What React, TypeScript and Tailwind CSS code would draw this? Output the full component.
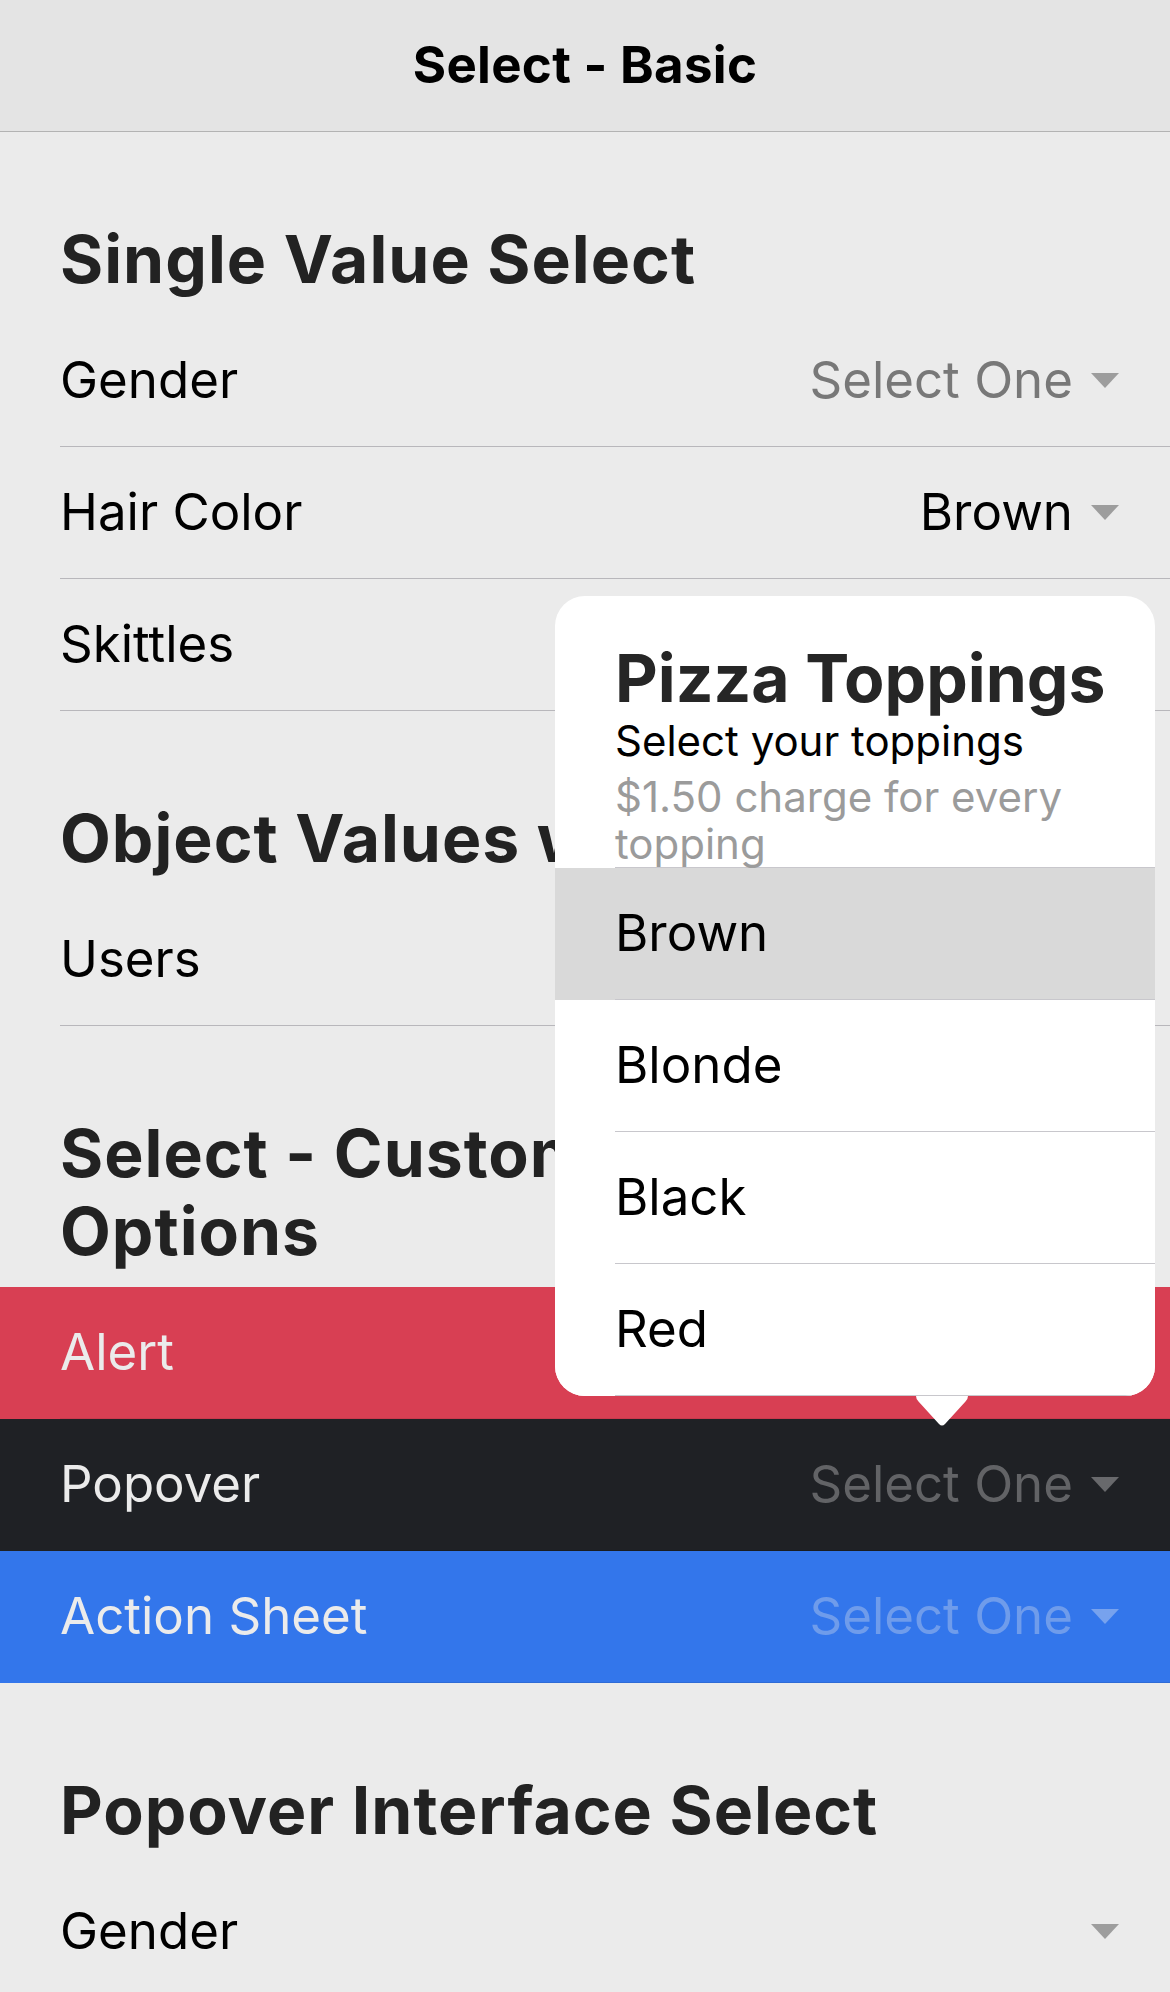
import React from "react";

type Tone = "light" | "danger" | "dark" | "primary";

const tones: Record<Tone, { bg: string; label: string; value: string; caret: string; line: string }> = {
  light: {
    bg: "bg-[#ebebeb]",
    label: "text-black",
    value: "text-[#787878]",
    caret: "border-t-[#9d9d9d]",
    line: "border-[#b8b7bb]",
  },
  danger: {
    bg: "bg-[#d83f53]",
    label: "text-[#ebebeb]",
    value: "text-[#e49aa4]",
    caret: "border-t-[#e49aa4]",
    line: "border-[#c93a4d]",
  },
  dark: {
    bg: "bg-[#1f2125]",
    label: "text-[#ebebeb]",
    value: "text-[#626366]",
    caret: "border-t-[#68696c]",
    line: "border-[#1a1c1f]",
  },
  primary: {
    bg: "bg-[#3376eb]",
    label: "text-[#ebebeb]",
    value: "text-[#6f9ceb]",
    caret: "border-t-[#77a2ee]",
    line: "border-[#2e6bd6]",
  },
};

const SelectRow = ({
  label,
  value,
  selected = false,
  tone = "light",
}: {
  label: string;
  value?: string;
  selected?: boolean;
  tone?: Tone;
}) => {
  const t = tones[tone];
  return (
    <div className={`h-[132px] pl-[60px] ${t.bg}`}>
      <div className={`h-full flex items-center pr-[51px] border-b ${t.line}`}>
        <span className={`text-[51px] ${t.label}`}>{label}</span>
        {value && (
          <span className={`ml-auto text-[51px] ${selected ? "text-black" : t.value}`}>
            {value}
          </span>
        )}
        <span
          className={`${value ? "ml-[18px]" : "ml-auto"} w-0 h-0 border-l-[14px] border-r-[14px] border-t-[15px] border-l-transparent border-r-transparent ${t.caret}`}
        />
      </div>
    </div>
  );
};

const ListHeader = ({ children, tall = false }: { children: React.ReactNode; tall?: boolean }) => (
  <div className={`${tall ? "h-[261px]" : "h-[183px]"} flex items-end pl-[60px] pr-[20px] pb-[17px]`}>
    <h2
      className={`text-[66px] leading-[78px] font-bold text-[#222222] tracking-[1px] ${
        tall ? "max-w-[900px]" : "whitespace-nowrap"
      }`}
    >
      {children}
    </h2>
  </div>
);

const toppings = ["Brown", "Blonde", "Black", "Red"];

export default function App() {
  return (
    <div className="relative h-[1992px] overflow-hidden bg-[#ebebeb] [font-family:Inter,sans-serif]">
      {/* toolbar */}
      <header className="h-[132px] bg-[#e4e4e4] border-b border-[#b3b3b3] flex items-center justify-center">
        <h1 className="text-[51px] font-bold text-black tracking-[0.3px]">Select - Basic</h1>
      </header>

      <ListHeader>Single Value Select</ListHeader>
      <SelectRow label="Gender" value="Select One" />
      <SelectRow label="Hair Color" value="Brown" selected />
      <SelectRow label="Skittles" value="Select One" />

      <ListHeader>Object Values with compareWith</ListHeader>
      <SelectRow label="Users" value="Select One" />

      <ListHeader tall>Select - Custom Interface Options</ListHeader>
      <SelectRow label="Alert" value="Select One" tone="danger" />
      <SelectRow label="Popover" value="Select One" tone="dark" />
      <SelectRow label="Action Sheet" value="Select One" tone="primary" />

      <ListHeader>Popover Interface Select</ListHeader>
      <SelectRow label="Gender" />

      {/* popover */}
      <div className="absolute left-[555px] top-[596px] w-[600px]">
        <div className="rounded-[30px] overflow-hidden bg-white">
          <div className="h-[272px] pl-[60px]">
            <div className="h-full border-b border-[#c8c7cc] pt-[43px] pr-[50px]">
              <h3 className="text-[66px] leading-[78px] font-bold text-[#262626] whitespace-nowrap">
                Pizza Toppings
              </h3>
              <p className="text-[42px] leading-[47px] text-black">Select your toppings</p>
              <p className="mt-[9px] text-[42px] leading-[47px] text-[#9b9b9b]">
                $1.50 charge for every topping
              </p>
            </div>
          </div>
          {toppings.map((item, i) => (
            <div key={item} className={`h-[132px] pl-[60px] ${i === 0 ? "bg-[#d9d9d9]" : "bg-white"}`}>
              <div className="h-full flex items-center border-b border-[#c8c7cc] text-[51px] text-black">
                {item}
              </div>
            </div>
          ))}
        </div>
        <svg
          className="absolute left-[361px] top-full"
          width="52"
          height="31"
          viewBox="0 0 52 31"
        >
          <path
            d="M0 0 H52 Q52 3 49.5 5.5 L29 28 Q26 31 23 28 L2.5 5.5 Q0 3 0 0 Z"
            fill="#ffffff"
          />
        </svg>
      </div>
    </div>
  );
}
